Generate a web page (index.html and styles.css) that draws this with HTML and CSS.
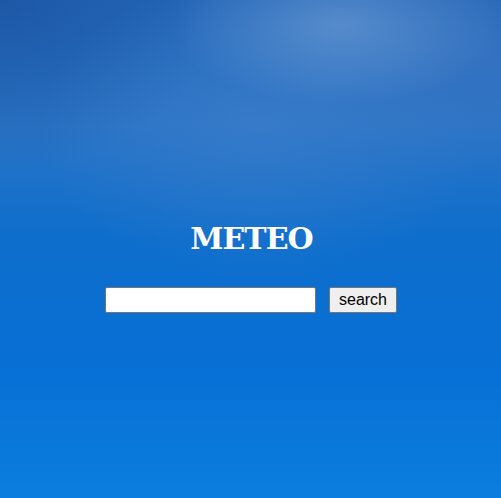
FILE: index.html
```html
<!DOCTYPE html>
<html>
<head>
<meta charset="utf-8">
<link rel="stylesheet" href="styles.css">
</head>
<body>
<main class="page">
  <h1 class="title">METEO</h1>
  <form class="search">
    <input class="search-input" type="text">
    <button class="search-btn" type="button">search</button>
  </form>
</main>
</body>
</html>
```
FILE: styles.css
```css
html, body {
  margin: 0;
  padding: 0;
  height: 100%;
}
body {
  background-color: #0a72d6;
  background-image:
    radial-gradient(ellipse 170px 80px at 340px 25px, rgba(120,165,215,0.55), rgba(120,165,215,0) 100%),
    radial-gradient(ellipse 220px 150px at 260px 130px, rgba(70,130,205,0.45), rgba(70,130,205,0) 100%),
    radial-gradient(ellipse 260px 120px at 500px 60px, rgba(70,120,195,0.4), rgba(70,120,195,0) 100%),
    radial-gradient(ellipse 220px 170px at 0px 0px, rgba(24,78,155,0.6), rgba(24,78,155,0) 100%),
    linear-gradient(to bottom, #2466b8 0%, #2a74c6 25%, #0e6ecc 48%, #0870d6 75%, #0a7edf 100%);
  font-family: "Liberation Sans", Arial, sans-serif;
}
.page {
  display: flex;
  flex-direction: column;
  align-items: center;
  padding-top: 217px;
}
.title {
  margin: 0;
  font-family: "DejaVu Serif", "Liberation Serif", serif;
  font-weight: bold;
  font-size: 30px;
  letter-spacing: -1px;
  line-height: 43px;
  color: #fff;
  padding-left: 2px;
}
.search {
  display: flex;
  gap: 13px;
  margin: 27px 0 0 1px;
}
.search-input {
  box-sizing: border-box;
  width: 211px;
  height: 26px;
  margin: 0;
  border: 1px solid #767676;
  border-radius: 2px;
  background: #fff;
  padding: 2px 4px;
}
.search-btn {
  box-sizing: border-box;
  width: 68px;
  height: 26px;
  margin: 0;
  border: 1px solid #767676;
  border-radius: 2px;
  background: #efefef;
  color: #000;
  font-family: "Liberation Sans", Arial, sans-serif;
  font-size: 16px;
  padding: 0;
}
```
